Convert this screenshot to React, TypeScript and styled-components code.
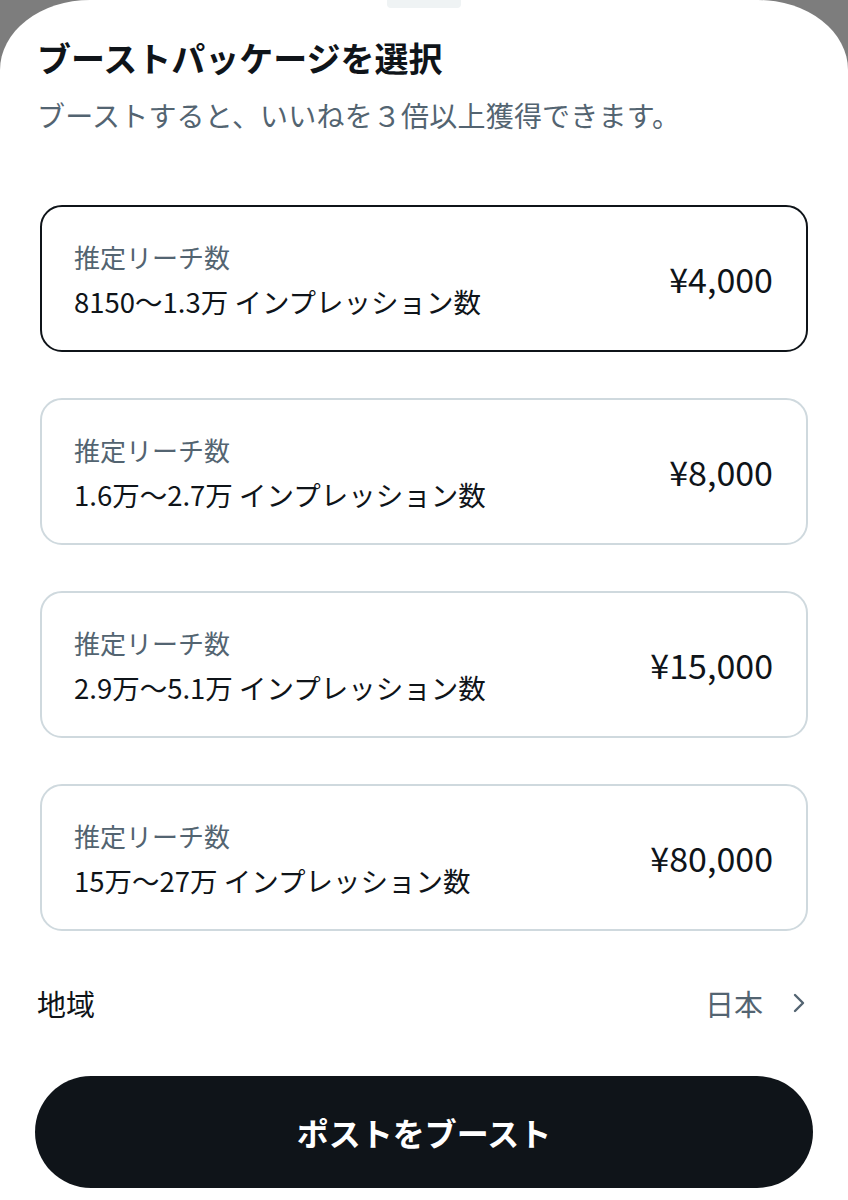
import React from "react";
import styled, { createGlobalStyle } from "styled-components";

const Global = createGlobalStyle`
  html, body { margin: 0; padding: 0; background: #7d7d7d; }
  body { font-family: "Noto Sans CJK JP", "Noto Sans", sans-serif; color: #0f1419; }
  #root { min-height: 1200px; }
`;

const Sheet = styled.div`
  width: 848px;
  height: 1200px;
  box-sizing: border-box;
  background: #ffffff;
  border-radius: 90px 90px 0 0 / 70px 70px 0 0;
  padding: 0 37px;
  display: flex;
  flex-direction: column;
  position: relative;
  overflow: hidden;
`;

const Handle = styled.div`
  position: absolute;
  top: 0;
  left: 387px;
  width: 74px;
  height: 8px;
  background: #eff3f4;
  border-radius: 0 0 4px 4px;
`;

const Title = styled.h1`
  margin: 38px 0 0;
  font-size: 34px;
  line-height: 40px;
  font-weight: 700;
  color: #0f1419;
`;

const Subtitle = styled.p`
  margin: 19px 0 0;
  font-size: 28px;
  line-height: 36px;
  font-weight: 400;
  color: #536471;
  letter-spacing: 0.2px;
`;

const CardList = styled.div`
  margin: 72px 3px 0;
  display: flex;
  flex-direction: column;
  gap: 46px;
`;

const Card = styled.div<{ $selected?: boolean }>`
  height: 147px;
  box-sizing: border-box;
  border: 2px solid ${(p) => (p.$selected ? "#0f1419" : "#cfd9de")};
  border-radius: 22px;
  padding: 0 33px 0 32px;
  display: flex;
  align-items: center;
  justify-content: space-between;
`;

const Info = styled.div`
  display: flex;
  flex-direction: column;
  gap: 10px;
`;

const Label = styled.div`
  font-size: 26px;
  line-height: 34px;
  color: #536471;
`;

const Reach = styled.div`
  font-size: 27.5px;
  line-height: 34px;
  font-weight: 400;
  color: #0f1419;
`;

const Price = styled.div`
  font-size: 34px;
  line-height: 40px;
  font-weight: 400;
  color: #0f1419;
`;

const RegionRow = styled.div`
  margin-top: 52px;
  height: 40px;
  display: flex;
  align-items: center;
  justify-content: space-between;
`;

const RegionLabel = styled.div`
  font-size: 29px;
  line-height: 40px;
  font-weight: 400;
`;

const RegionValue = styled.div`
  display: flex;
  align-items: center;
  gap: 30px;
  font-size: 29px;
  line-height: 40px;
  color: #536471;
  padding-right: 6px;
`;

const BoostButton = styled.button`
  margin: 53px -2px 0;
  height: 112px;
  border: none;
  border-radius: 56px;
  background: #0f1419;
  color: #ffffff;
  font-family: "Noto Sans CJK JP", "Noto Sans", sans-serif;
  font-size: 32px;
  font-weight: 700;
  display: flex;
  align-items: center;
  justify-content: center;
`;

const packages = [
  { reach: "8150～1.3万 インプレッション数", price: "¥4,000", selected: true },
  { reach: "1.6万～2.7万 インプレッション数", price: "¥8,000" },
  { reach: "2.9万～5.1万 インプレッション数", price: "¥15,000" },
  { reach: "15万～27万 インプレッション数", price: "¥80,000" },
];

export default function App() {
  return (
    <>
      <Global />
      <Sheet>
        <Handle />
        <Title>ブーストパッケージを選択</Title>
        <Subtitle>ブーストすると、いいねを３倍以上獲得できます。</Subtitle>
        <CardList>
          {packages.map((p) => (
            <Card key={p.price} $selected={p.selected}>
              <Info>
                <Label>推定リーチ数</Label>
                <Reach>{p.reach}</Reach>
              </Info>
              <Price>{p.price}</Price>
            </Card>
          ))}
        </CardList>
        <RegionRow>
          <RegionLabel>地域</RegionLabel>
          <RegionValue>
            日本
            <svg width="12" height="20" viewBox="0 0 12 20" fill="none">
              <polyline points="2,2 10,10 2,18" stroke="#536471" strokeWidth="2.4" strokeLinecap="round" strokeLinejoin="round" />
            </svg>
          </RegionValue>
        </RegionRow>
        <BoostButton>ポストをブースト</BoostButton>
      </Sheet>
    </>
  );
}
